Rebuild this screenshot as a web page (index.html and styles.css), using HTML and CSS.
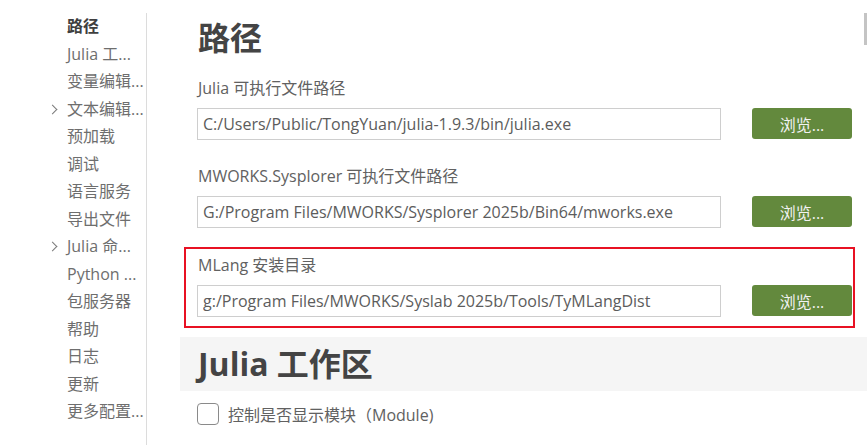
FILE: index.html
```html
<!DOCTYPE html>
<html lang="zh-CN">
<head>
<meta charset="utf-8">
<title>设置 - 路径</title>
<link rel="stylesheet" href="styles.css">
</head>
<body>
<div class="app">
  <nav class="sidebar">
    <ul class="nav">
      <li class="nav-item active">路径</li>
      <li class="nav-item">Julia 工...</li>
      <li class="nav-item">变量编辑...</li>
      <li class="nav-item has-children"><span class="chev"></span>文本编辑...</li>
      <li class="nav-item">预加载</li>
      <li class="nav-item">调试</li>
      <li class="nav-item">语言服务</li>
      <li class="nav-item">导出文件</li>
      <li class="nav-item has-children"><span class="chev"></span>Julia 命...</li>
      <li class="nav-item">Python ...</li>
      <li class="nav-item">包服务器</li>
      <li class="nav-item">帮助</li>
      <li class="nav-item">日志</li>
      <li class="nav-item">更新</li>
      <li class="nav-item">更多配置...</li>
    </ul>
  </nav>
  <main class="content">
    <section class="section">
      <h1 class="section-title">路径</h1>
      <div class="setting">
        <div class="setting-label">Julia 可执行文件路径</div>
        <div class="setting-row">
          <input class="path-input" type="text" value="C:/Users/Public/TongYuan/julia-1.9.3/bin/julia.exe">
          <button class="browse-btn">浏览...</button>
        </div>
      </div>
      <div class="setting">
        <div class="setting-label">MWORKS.Sysplorer 可执行文件路径</div>
        <div class="setting-row">
          <input class="path-input" type="text" value="G:/Program Files/MWORKS/Sysplorer 2025b/Bin64/mworks.exe">
          <button class="browse-btn">浏览...</button>
        </div>
      </div>
      <div class="setting highlight">
        <div class="setting-label">MLang 安装目录</div>
        <div class="setting-row">
          <input class="path-input" type="text" value="g:/Program Files/MWORKS/Syslab 2025b/Tools/TyMLangDist">
          <button class="browse-btn">浏览...</button>
        </div>
      </div>
    </section>
    <section class="section">
      <h1 class="section-title shaded">Julia 工作区</h1>
      <label class="check-row">
        <span class="checkbox"></span>
        <span class="check-text">控制是否显示模块（Module)</span>
      </label>
    </section>
  </main>
  <div class="scrollbar"></div>
</div>
</body>
</html>
```

FILE: styles.css
```css
* { box-sizing: border-box; }
html, body {
  margin: 0;
  padding: 0;
  background: #ffffff;
  width: 867px;
  height: 445px;
  overflow: hidden;
  font-family: "Open Sans", "Noto Sans CJK SC", sans-serif;
  color: #616161;
}
.app {
  position: relative;
  display: flex;
  padding-top: 13px;
  height: 445px;
}
.sidebar {
  width: 147px;
  flex: none;
  border-right: 1px solid #dcdcdc;
  height: 432px;
}
.nav {
  list-style: none;
  margin: 0;
  padding: 0 0 0 67px;
}
.nav-item {
  position: relative;
  font-size: 16px;
  line-height: 27.5px;
  height: 27.5px;
  color: #6e6e6e;
  white-space: nowrap;
}
.nav-item.active {
  font-weight: 700;
  color: #3f3f3f;
}
.nav-item .chev {
  position: absolute;
  left: -18px;
  top: 10px;
  width: 7px;
  height: 7px;
  border-right: 1.2px solid #7a7a7a;
  border-bottom: 1.2px solid #7a7a7a;
  transform: rotate(-45deg);
}
.content {
  flex: 1;
  padding-left: 33px;
}
.section-title {
  margin: 0;
  font-size: 32px;
  line-height: 44px;
  font-weight: 700;
  color: #444444;
  padding: 3px 18px 0;
  height: 57px;
}
.section-title.shaded {
  background: #f5f5f5;
  height: 54px;
  padding: 5px 18px;
  margin-top: 9px;
}
.setting {
  margin-left: 4px;
  width: 671px;
  border: 2px solid transparent;
  padding: 6px 0 8px 11px;
  height: 88px;
}
.setting.highlight {
  border-color: #e81123;
  height: 81px;
  margin-top: 1px;
}
.setting-label {
  font-size: 16px;
  line-height: 20px;
  color: #616161;
  padding-left: 1px;
}
.setting-row {
  display: flex;
  align-items: flex-start;
  gap: 31px;
  margin-top: 10px;
}
.path-input {
  width: 524px;
  height: 32px;
  border: 1px solid #cecece;
  border-radius: 0;
  padding: 0 5px;
  font-family: "Open Sans", "Noto Sans CJK SC", sans-serif;
  font-size: 16px;
  color: #5c5c5c;
  background: #ffffff;
  outline: none;
}
.browse-btn {
  width: 100px;
  height: 31px;
  border: none;
  border-radius: 3px;
  background: #63893d;
  color: #f2f2f2;
  font-family: "Open Sans", "Noto Sans CJK SC", sans-serif;
  font-size: 16px;
  padding: 0;
}
.check-row {
  display: flex;
  align-items: center;
  gap: 9px;
  margin: 11px 0 0 17px;
}
.checkbox {
  width: 22px;
  height: 22px;
  border: 1px solid #8a8a8a;
  border-radius: 4px;
  background: #fff;
}
.check-text {
  font-size: 16px;
  color: #616161;
}
.scrollbar {
  position: absolute;
  right: 0;
  top: 13px;
  width: 3px;
  height: 32px;
  background: #c4c4c4;
}
```
